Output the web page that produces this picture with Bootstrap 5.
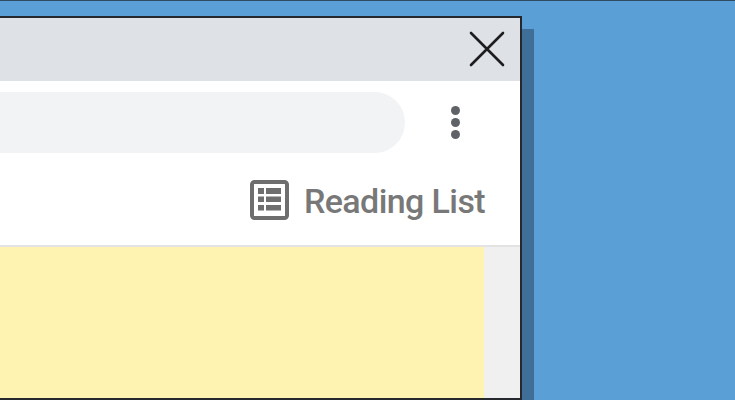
<!DOCTYPE html>
<html lang="en">
<head>
    <meta charset="UTF-8">
    <meta name="viewport" content="width=device-width, initial-scale=1.0">
    <title>Reading List</title>
    <link href="https://cdn.jsdelivr.net/npm/bootstrap@5.3.0/dist/css/bootstrap.min.css" rel="stylesheet">
    <style>
        html, body { height: 400px; overflow: hidden; }
        body { background: #5b9fd7; }
        .stage { height: 400px; padding-top: 15px; border-top: 1px solid #2f4b63; }
        .browser-win { width: 522px; height: 384px; background: #fff; border: 2px solid #25282c; border-left: 0; box-shadow: 12px 13px 0 #3f6e96; }
        .tab-strip { height: 63px; background: #dee1e5; padding-right: 15px; }
        .tool-strip { height: 89px; padding-top: 11px; padding-right: 60px; }
        .addr-pill { width: 405px; height: 61px; background: #f1f3f4; border-radius: 0 31px 31px 0; }
        .menu-dots { width: 9px; gap: 3px; margin-top: 14px; }
        .menu-dots span { width: 9px; height: 9px; border-radius: 50%; background: #5f6368; }
        .list-strip { height: 78px; padding-right: 35px; padding-bottom: 16px; border-bottom: 2px solid #e3e3e3; gap: 15px; }
        .list-label { font-family: Roboto, "Liberation Sans", sans-serif; font-size: 34px; font-weight: 500; letter-spacing: -0.6px; line-height: 1; padding-top: 2px; color: #787878; }
        .page-area { height: 151px; }
        .note-yellow { width: 484px; background: #fef3b1; }
        .scroll-track { background: #f0f0f0; }
    </style>
</head>
<body>
    <div class="stage">
        <div class="browser-win d-flex flex-column">
            <div class="tab-strip d-flex align-items-center justify-content-end">
                <svg width="36" height="36" viewBox="0 0 36 36" fill="none" stroke="#1d1d1f" stroke-width="2.6" stroke-linecap="round">
                    <path d="M2 2 L34 34 M34 2 L2 34"/>
                </svg>
            </div>
            <div class="tool-strip d-flex justify-content-between align-items-start">
                <div class="addr-pill"></div>
                <div class="menu-dots d-flex flex-column">
                    <span></span><span></span><span></span>
                </div>
            </div>
            <div class="list-strip d-flex align-items-center justify-content-end">
                <svg width="39" height="40" viewBox="0 0 39 40">
                    <rect x="2" y="2" width="35" height="36" rx="2.5" fill="#fff" stroke="#6e6e6e" stroke-width="4"/>
                    <g fill="#6e6e6e">
                        <rect x="8" y="8" width="6" height="6"/><rect x="16" y="8" width="15" height="6"/>
                        <rect x="8" y="16.5" width="6" height="5.5"/><rect x="16" y="16.5" width="15" height="5.5"/>
                        <rect x="8" y="25" width="6" height="5.5"/><rect x="16" y="25" width="15" height="5.5"/>
                    </g>
                </svg>
                <span class="list-label">Reading List</span>
            </div>
            <div class="page-area d-flex flex-grow-1">
                <div class="note-yellow"></div>
                <div class="scroll-track flex-grow-1"></div>
            </div>
        </div>
    </div>
    <script src="https://cdn.jsdelivr.net/npm/bootstrap@5.3.0/dist/js/bootstrap.bundle.min.js"></script>
</body>
</html>
